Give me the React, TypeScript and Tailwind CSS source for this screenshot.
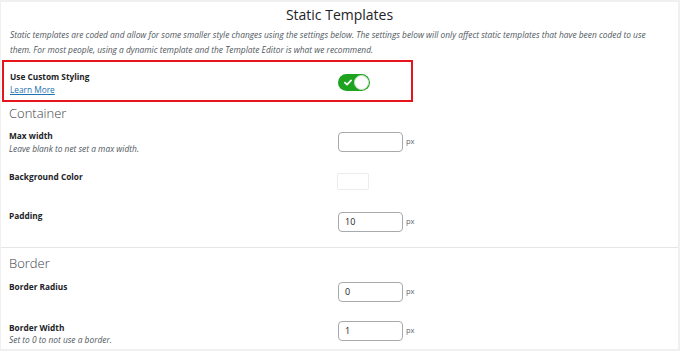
import React from "react";

const font = { fontFamily: '"Open Sans", "Noto Sans", Arial, sans-serif' };

function NumInput({ value }: { value?: string }) {
  return (
    <div className="flex items-center">
      <div className="w-[65px] h-[20px] border border-[#a7aaad] rounded-[4px] bg-white flex items-center pl-[6px] text-[9px] text-[#1d2327]">
        {value}
      </div>
      <span className="ml-[3px] text-[7.5px] text-[#646970]">px</span>
    </div>
  );
}

function Label({ children }: { children: React.ReactNode }) {
  return <div className="text-[8.3px] font-bold text-[#1d2327] leading-[12px]">{children}</div>;
}

function Help({ children, className }: { children: React.ReactNode; className?: string }) {
  return (
    <div className={"text-[8.4px] italic text-[#50575e] leading-[13px] " + (className ?? "")}>{children}</div>
  );
}

export default function App() {
  return (
    <div className="w-[680px] h-[351px] bg-[#f0f0f1] pt-[2px] pl-[1px] pr-[2px]" style={font}>
      <div className="bg-white h-[347px] overflow-hidden">
        <h1 className="text-center text-[14px] text-[#1d2327] leading-[18px] pt-[4px]">Static Templates</h1>
        <p className="pl-[9px] pr-[12px] mt-[3px] text-[8.4px] italic text-[#50575e] leading-[15px]">
          Static templates are coded and allow for some smaller style changes using the settings below. The settings below will only affect static templates that have been coded to use them. For most people, using a dynamic template and the Template Editor is what we recommend.
        </p>
        <div className="ml-[1px] mt-[3px] w-[411px] h-[42px] border-2 border-[#e8141c] flex items-start">
          <div className="w-[334px] pl-[6px] pt-[9px] leading-[12.5px]">
            <div className="text-[8.3px] font-bold text-[#1d2327] leading-[12.5px]">Use Custom Styling</div>
            <a className="block text-[8.3px] text-[#2271b1] underline leading-[12.5px]">Learn More</a>
          </div>
          <div className="mt-[12px] w-[32px] h-[17px] rounded-full bg-[#1ea31e] flex items-center justify-between pl-[6px] pr-[1px]">
            <svg width="8" height="7" viewBox="0 0 9 8">
              <path d="M1 4.2 L3.4 6.4 L8 1.6" stroke="white" strokeWidth="2" fill="none" strokeLinecap="round" strokeLinejoin="round" />
            </svg>
            <div className="w-[15px] h-[15px] rounded-full bg-[#fdfdfd] border border-[#cfe6cf]" />
          </div>
        </div>
        <h2 className="pl-[8px] text-[13px] font-light text-[#3c434a] leading-[20px] mt-[1px]">Container</h2>

        <div className="flex mt-[7px]">
          <div className="w-[337px] pl-[8px]">
            <Label>Max width</Label>
            <Help>Leave blank to net set a max width.</Help>
          </div>
          <div className="mt-[2px]"><NumInput /></div>
        </div>

        <div className="flex mt-[16px]">
          <div className="w-[337px] pl-[8px]">
            <Label>Background Color</Label>
          </div>
          <div className="mt-[2px] w-[32px] h-[17px] border border-[#ececec] rounded-[2px] -ml-[1px]" />
        </div>

        <div className="flex mt-[20px]">
          <div className="w-[337px] pl-[8px]">
            <Label>Padding</Label>
          </div>
          <div className="mt-[2px]"><NumInput value="10" /></div>
        </div>

        <div className="mt-[15px] border-t border-[#e6e6e6]" />

        <h2 className="pl-[8px] text-[13px] font-light text-[#3c434a] leading-[20px] mt-[5px]">Border</h2>

        <div className="flex mt-[8px]">
          <div className="w-[337px] pl-[8px]">
            <Label>Border Radius</Label>
          </div>
          <div className="mt-[1px]"><NumInput value="0" /></div>
        </div>

        <div className="flex mt-[20px]">
          <div className="w-[337px] pl-[8px]">
            <Label>Border Width</Label>
            <Help className="-mt-[1px]">Set to 0 to not use a border.</Help>
          </div>
          <div className="-mt-[1px]"><NumInput value="1" /></div>
        </div>
      </div>
    </div>
  );
}
